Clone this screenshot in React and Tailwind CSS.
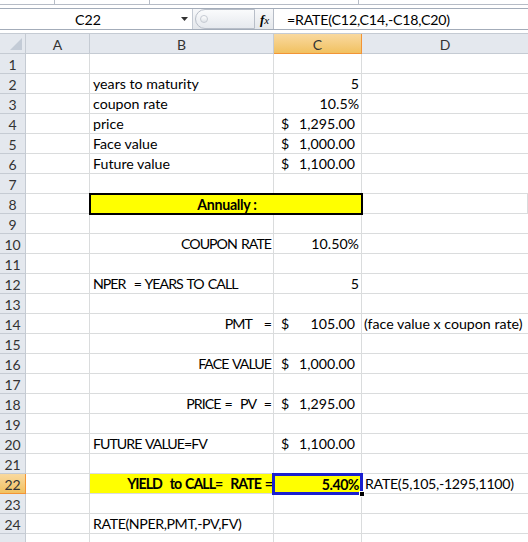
import React from "react";

const F = { fontFamily: "Lato, 'Open Sans', sans-serif" };

function Acct({ v }) {
  return (
    <div className="flex h-full w-full items-center justify-between pl-[7px] pr-[6px] pt-[2px]">
      <span>$</span>
      <span>{v}</span>
    </div>
  );
}

const rows = {
  2: { b: { t: "years to maturity" }, c: { t: "5", r: true } },
  3: { b: { t: "coupon rate" }, c: { t: "10.5%", r: true } },
  4: { b: { t: "price" }, c: { acct: "1,295.00" } },
  5: { b: { t: "Face value" }, c: { acct: "1,000.00" } },
  6: { b: { t: "Future value" }, c: { acct: "1,100.00" } },
  10: { b: { t: "COUPON RATE", r: true, caps: true }, c: { t: "10.50%", r: true } },
  12: { b: { t: "NPER  = YEARS TO CALL", caps: true }, c: { t: "5", r: true } },
  14: { b: { t: "PMT   =", r: true, caps: true }, c: { acct: "105.00" }, d: "(face value x coupon rate)" },
  16: { b: { t: "FACE VALUE", r: true, caps: true }, c: { acct: "1,000.00" } },
  18: { b: { t: "PRICE =  PV  =", r: true, caps: true }, c: { acct: "1,295.00" } },
  20: { b: { t: "FUTURE VALUE=FV", caps: true }, c: { acct: "1,100.00" } },
  24: { b: { t: "RATE(NPER,PMT,-PV,FV)", mid: true } },
};

function TextCell({ cell }) {
  if (!cell) return null;
  if (cell.acct) return <Acct v={cell.acct} />;
  return (
    <div
      className={
        "flex h-full items-center whitespace-pre pt-[2px] " +
        (cell.r ? "justify-end pr-[2px] " : "pl-[3px] ") +
        (cell.caps ? "tracking-[-1px] [word-spacing:1.5px]" : "") +
        (cell.mid ? "tracking-[-0.4px]" : "")
      }
    >
      {cell.t}
    </div>
  );
}

const grid = "grid grid-cols-[26px_64px_184px_88px_1fr]";
const cellCls = "h-[20px] border-r border-b border-[#dadcdd] overflow-visible";
const rowHead =
  "h-[20px] border-r border-b border-[#c5cbd3] bg-[#e4e8ee] flex items-center justify-center pt-[2px] text-[#333] text-[14px]";

function Row({ n }) {
  const r = rows[n] || {};
  if (n === 8) {
    return (
      <div className={grid}>
        <div className={rowHead}>{n}</div>
        <div className={cellCls}></div>
        <div className="relative col-span-2 h-[20px] border-b border-[#dadcdd]">
          <div className="absolute left-[-1px] right-[-1px] top-[-1px] bottom-[-2px] flex items-center justify-center border-2 border-black bg-[#ffff00] pl-[2px] pt-[2px] font-bold tracking-[-0.3px]">
            Annually :
          </div>
        </div>
        <div className={cellCls}></div>
      </div>
    );
  }
  if (n === 22) {
    return (
      <div className={grid}>
        <div className="flex h-[20px] items-center justify-center border-r border-b border-[#f29436] bg-gradient-to-b from-[#f9d99f] to-[#f1c15f] pt-[2px] text-[14px] text-[#333]">
          {n}
        </div>
        <div className={cellCls}></div>
        <div className="flex h-[20px] items-center justify-end whitespace-pre border-b border-[#dadcdd] bg-[#ffff00] pr-[2px] pt-[2px] font-bold tracking-[-1px] [word-spacing:1.5px]">
          {"YIELD  to CALL=  RATE ="}
        </div>
        <div className="relative h-[20px] bg-[#ffff00]">
          <div className="absolute left-[-2px] right-[-1px] top-[-1px] bottom-[-1px] flex items-center justify-end border-[3px] border-[#1a1fd0] pr-[1px] pt-[2px] font-bold tracking-[-0.5px]">
            5.40%
          </div>
          <div className="absolute bottom-[-3px] right-[-3px] h-[6px] w-[6px] border border-white bg-black"></div>
        </div>
        <div className="flex h-[20px] items-center whitespace-pre border-b border-[#dadcdd] pl-[3px] pt-[2px] tracking-[-0.3px]">
          RATE(5,105,-1295,1100)
        </div>
      </div>
    );
  }
  return (
    <div className={grid}>
      <div className={rowHead}>{n === 25 ? "" : n}</div>
      <div className={cellCls}></div>
      <div className={cellCls}>
        <TextCell cell={r.b} />
      </div>
      <div className={cellCls}>
        <TextCell cell={r.c} />
      </div>
      <div className={"h-[20px] border-b border-[#dadcdd]"}>
        {r.d && <div className="flex h-full items-center whitespace-pre pl-[2px] pt-[2px]">{r.d}</div>}
      </div>
    </div>
  );
}

export default function App() {
  const nums = Array.from({ length: 25 }, (_, i) => i + 1);
  return (
    <div className="h-[542px] w-[528px] overflow-hidden bg-white text-[14.2px] leading-none text-black" style={F}>
      {/* top strip */}
      <div className="flex h-[5px] border-b border-[#b6bcc6] bg-white">
        <div className="w-[55px] border-r border-[#b6bcc6]"></div>
        <div className="w-[95px] border-r border-[#b6bcc6]"></div>
        <div className="w-[209px] border-r border-[#b6bcc6]"></div>
      </div>
      <div className="h-[3px] bg-white"></div>
      {/* formula bar */}
      <div className="flex h-[22px] border-y border-[#a3acb9] bg-white">
        <div className="relative flex w-[193px] items-center border-r border-[#c4cad3] pt-[2px]">
          <div className="w-[176px] text-center">C22</div>
          <svg className="absolute right-[4px] top-[8px]" width="7" height="4" viewBox="0 0 7 4">
            <path d="M0 0 L7 0 L3.5 4 Z" fill="#333" />
          </svg>
        </div>
        <div className="flex w-[81px] items-center border-r border-[#b6bcc6] bg-gradient-to-b from-[#f7f8fa] to-[#e4e7eb]">
          <div className="ml-[2px] flex h-[20px] w-[60px] items-center rounded-l-full border border-[#b8bec8] bg-gradient-to-b from-[#fafbfc] to-[#e6e9ee] pl-[4px]">
            <div className="h-[8px] w-[8px] rounded-full border border-[#c5cad2] bg-gradient-to-b from-[#ffffff] to-[#dfe3e8]"></div>
          </div>
          <div className="ml-[5px] text-[13px] italic" style={{ fontFamily: "'Liberation Serif', serif" }}>
            <span className="font-bold">f</span>
            <span className="text-[11px]">x</span>
          </div>
        </div>
        <div className="flex flex-1 items-center whitespace-pre pl-[13px] pt-[2px] tracking-[-0.2px]">=RATE(C12,C14,-C18,C20)</div>
      </div>
      <div className="h-[3px] bg-white"></div>
      {/* column header */}
      <div className={grid + " border-t border-[#c5cbd3]"}>
        <div className="relative h-[20px] border-r border-b border-[#c5cbd3] bg-[#e4e8ee]">
          <svg className="absolute bottom-[3px] right-[3px]" width="12" height="12" viewBox="0 0 12 12">
            <path d="M12 0 L12 12 L0 12 Z" fill="#c3cbd6" />
          </svg>
        </div>
        <div className="flex h-[20px] items-center justify-center border-r border-b border-[#c5cbd3] bg-[#e4e8ee] pt-[2px] text-[14px] text-[#333]">A</div>
        <div className="flex h-[20px] items-center justify-center border-r border-b border-[#c5cbd3] bg-[#e4e8ee] pt-[2px] text-[14px] text-[#333]">B</div>
        <div className="flex h-[20px] items-center justify-center border-r border-b border-[#f29436] bg-gradient-to-b from-[#f9d99f] to-[#f1c15f] pt-[2px] text-[14px] text-[#333]">C</div>
        <div className="flex h-[20px] items-center justify-center border-b border-[#c5cbd3] bg-[#e4e8ee] pt-[2px] text-[14px] text-[#333]">D</div>
      </div>
      {nums.map((n) => (
        <Row key={n} n={n} />
      ))}
    </div>
  );
}
